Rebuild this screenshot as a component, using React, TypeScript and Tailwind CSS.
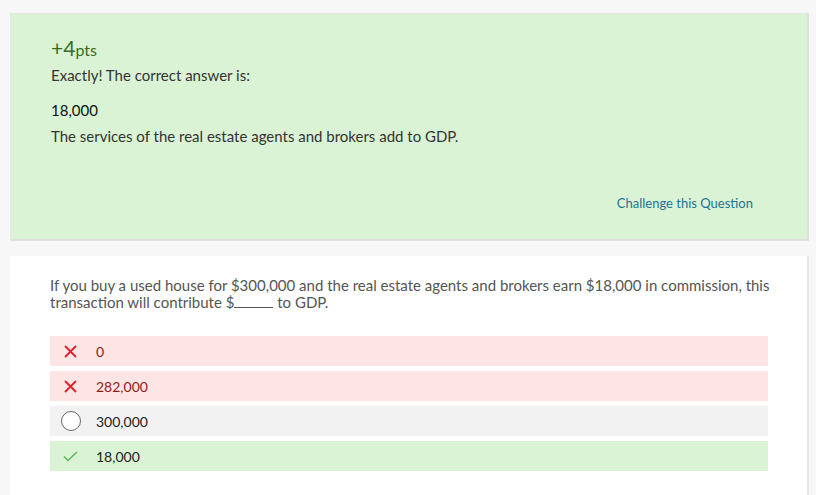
import React from "react";

type Option = {
  label: string;
  state: "wrong" | "neutral" | "correct";
};

const options: Option[] = [
  { label: "0", state: "wrong" },
  { label: "282,000", state: "wrong" },
  { label: "300,000", state: "neutral" },
  { label: "18,000", state: "correct" },
];

function OptionIcon({ state }: { state: Option["state"] }) {
  if (state === "wrong") {
    return (
      <svg width="13" height="13" viewBox="0 0 13 13" className="text-[#e0202e]">
        <path d="M1 1 L12 12 M12 1 L1 12" stroke="currentColor" strokeWidth="1.8" fill="none" />
      </svg>
    );
  }
  if (state === "correct") {
    return (
      <svg width="15" height="11" viewBox="0 0 15 11" className="text-[#5cb85c]">
        <path d="M1 5.5 L5 9.5 L14 1" stroke="currentColor" strokeWidth="1.6" fill="none" />
      </svg>
    );
  }
  return <div className="w-[20px] h-[20px] rounded-full border border-[#666] bg-white" />;
}

export default function App() {
  return (
    <div
      className="w-[816px] h-[495px] bg-[#f7f7f7] pt-[13px] pl-[10px] pr-[7px] overflow-hidden"
      style={{ fontFamily: "Lato, 'Liberation Sans', sans-serif" }}
    >
      {/* --- Feedback card --- */}
      <div className="bg-[#dbf3d5] border-r-2 border-b-2 border-[#e0e0e0] border-t border-l border-t-[#e6e6e6] border-l-[#e6e6e6] pl-[40px] pr-[54px] pt-[22px] h-[228px]">
        <div className="text-[#3b6b1c] leading-[24px]">
          <span className="text-[21px]">+4</span>
          <span className="text-[16px]">pts</span>
        </div>
        <p className="text-[#333] text-[15px] leading-[20px] mt-[3px]">Exactly! The correct answer is:</p>
        <p className="text-[#111] text-[15px] leading-[20px] mt-[15px]">18,000</p>
        <p className="text-[#333] text-[15px] leading-[20px] mt-[6px]">
          The services of the real estate agents and brokers add to GDP.
        </p>
        <div className="flex justify-end mt-[49px]">
          <a className="text-[#1f7290] text-[13px] leading-[16px] cursor-pointer">Challenge this Question</a>
        </div>
      </div>

      {/* --- Question card --- */}
      <div className="bg-white border-r-2 border-[#e6e6e6] mt-[15px] pl-[40px] pr-[39px] pt-[21px] h-[300px]">
        <p className="text-[#555] text-[15px] leading-[17px] w-[728px]">
          If you buy a used house for $300,000 and the real estate agents and brokers earn $18,000 in commission, this
          transaction will contribute $
          <span className="inline-block w-[39px] h-[12px] border-b border-[#555] align-baseline" /> to GDP.
        </p>
        <div className="mt-[25px] flex flex-col gap-[5px]">
          {options.map((o) => (
            <div
              key={o.label}
              className={`h-[30px] flex items-center ${
                o.state === "wrong" ? "bg-[#fde5e5]" : o.state === "correct" ? "bg-[#dbf3d5]" : "bg-[#f2f2f2]"
              }`}
            >
              <div className="w-[41px] flex justify-center">
                <OptionIcon state={o.state} />
              </div>
              <span
                className={`ml-[5px] text-[14px] ${
                  o.state === "wrong" ? "text-[#8a1c1c]" : "text-[#222]"
                }`}
              >
                {o.label}
              </span>
            </div>
          ))}
        </div>
      </div>
    </div>
  );
}
